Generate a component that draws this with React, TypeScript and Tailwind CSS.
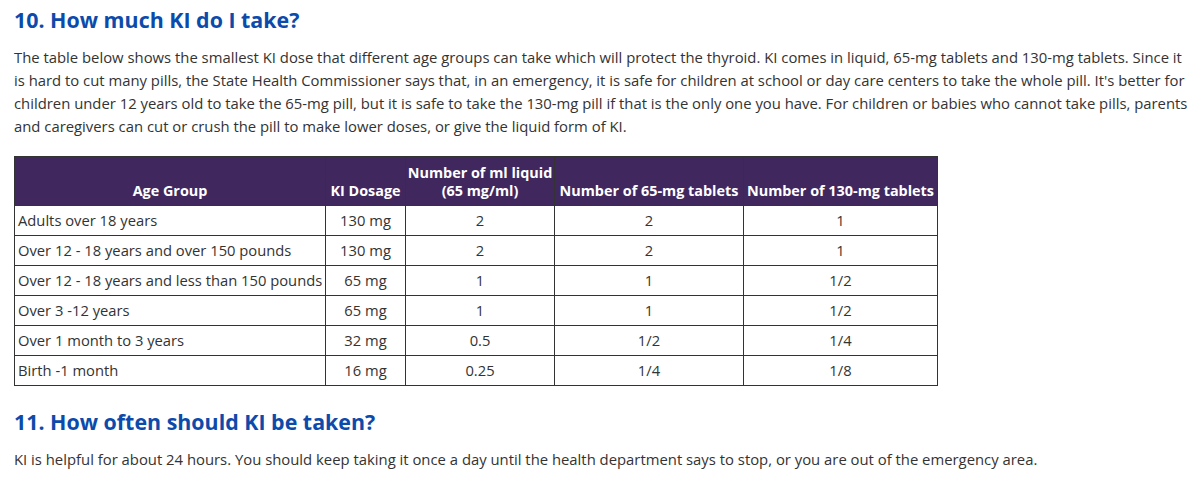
const rows = [
  ["Adults over 18 years", "130 mg", "2", "2", "1"],
  ["Over 12 - 18 years and over 150 pounds", "130 mg", "2", "2", "1"],
  ["Over 12 - 18 years and less than 150 pounds", "65 mg", "1", "1", "1/2"],
  ["Over 3 -12 years", "65 mg", "1", "1", "1/2"],
  ["Over 1 month to 3 years", "32 mg", "0.5", "1/2", "1/4"],
  ["Birth -1 month", "16 mg", "0.25", "1/4", "1/8"],
];

const introLines = [
  "The table below shows the smallest KI dose that different age groups can take which will protect the thyroid. KI comes in liquid, 65-mg tablets and 130-mg tablets. Since it",
  "is hard to cut many pills, the State Health Commissioner says that, in an emergency, it is safe for children at school or day care centers to take the whole pill. It's better for",
  "children under 12 years old to take the 65-mg pill, but it is safe to take the 130-mg pill if that is the only one you have. For children or babies who cannot take pills, parents",
  "and caregivers can cut or crush the pill to make lower doses, or give the liquid form of KI.",
];

export default function App() {
  return (
    <div className="w-[1200px] h-[496px] bg-white px-[14px] pt-[6px] font-['Open_Sans',sans-serif] text-[#333333] overflow-hidden">
      <h2 className="text-[21.4px] leading-[28px] font-bold text-[#0c4bab]">10. How much KI do I take?</h2>

      <p className="mt-[12px] text-[14.85px] leading-[23px]">
        {introLines.map((line) => (
          <span key={line} className="block whitespace-nowrap">{line}</span>
        ))}
      </p>

      <table className="mt-[18px] border-collapse table-fixed w-[923px] text-[14.75px]">
        <colgroup>
          <col className="w-[311px]" />
          <col className="w-[80px]" />
          <col className="w-[149px]" />
          <col className="w-[189px]" />
          <col className="w-[194px]" />
        </colgroup>
        <thead>
          <tr className="bg-[#40285f] text-white font-bold text-[14.4px] leading-[18px] h-[49px]">
            <th className="border border-[#333] align-bottom pb-[5px] px-0">Age Group</th>
            <th className="border border-[#333] align-bottom pb-[5px] px-0 whitespace-nowrap">KI Dosage</th>
            <th className="border border-[#333] align-bottom pb-[5px] px-0">
              Number of ml liquid
              <br />
              (65 mg/ml)
            </th>
            <th className="border border-[#333] align-bottom pb-[5px] px-0 whitespace-nowrap">Number of 65-mg tablets</th>
            <th className="border border-[#333] align-bottom pb-[5px] px-0 whitespace-nowrap">Number of 130-mg tablets</th>
          </tr>
        </thead>
        <tbody>
          {rows.map((r) => (
            <tr key={r[0]} className="h-[30px]">
              <td className="border border-[#333] px-[3px] whitespace-nowrap">{r[0]}</td>
              <td className="border border-[#333] text-center">{r[1]}</td>
              <td className="border border-[#333] text-center">{r[2]}</td>
              <td className="border border-[#333] text-center">{r[3]}</td>
              <td className="border border-[#333] text-center">{r[4]}</td>
            </tr>
          ))}
        </tbody>
      </table>

      <h2 className="mt-[22px] text-[21.4px] leading-[28px] font-bold text-[#0c4bab]">11. How often should KI be taken?</h2>
      <p className="mt-[12px] text-[14.85px] leading-[23px] whitespace-nowrap">
        KI is helpful for about 24 hours. You should keep taking it once a day until the health department says to stop, or you are out of the emergency area.
      </p>
    </div>
  );
}
